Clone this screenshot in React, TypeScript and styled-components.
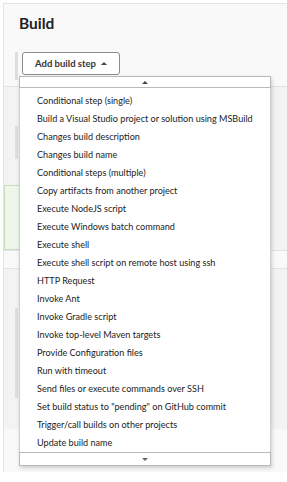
import React from "react";
import styled, { createGlobalStyle } from "styled-components";

const Global = createGlobalStyle`
  html, body { margin: 0; padding: 0; background: #ffffff; }
  body { font-family: Lato, "Open Sans", sans-serif; color: #333; }
  * { box-sizing: border-box; }
`;

const Page = styled.div`
  position: relative;
  width: 287px;
  height: 482px;
  overflow: hidden;
  padding: 3px 0 0 3px;
  background: #ffffff;
`;

const Panel = styled.div`
  border-top: 1px solid #e4e4e4;
  border-left: 1px solid #e4e4e4;
  background: #f9f9f9;
  height: 469px;
  display: flex;
  flex-direction: column;
`;

const Heading = styled.h2`
  margin: 9px 0 0 15px;
  font-family: Lato, "Open Sans", sans-serif;
  font-weight: 700;
  font-size: 15.5px;
  line-height: 20px;
  color: #222;
`;

const ButtonRow = styled.div`
  display: flex;
  align-items: flex-start;
  gap: 4px;
  margin: 19px 0 0 11px;
  height: 26px;
`;

const Handle = styled.div<{ $h: number }>`
  width: 3px;
  height: ${(p) => p.$h}px;
  background: #dedede;
`;

const AddButton = styled.button`
  display: flex;
  align-items: center;
  justify-content: center;
  gap: 5px;
  width: 98px;
  height: 23px;
  padding: 0;
  border: 1px solid #8c8c8c;
  border-radius: 3px;
  background: #ffffff;
  font-family: Lato, "Open Sans", sans-serif;
  font-size: 9.5px;
  font-weight: 700;
  color: #333;
`;

const Caret = styled.span<{ $down?: boolean }>`
  display: inline-block;
  width: 0;
  height: 0;
  border-left: 3px solid transparent;
  border-right: 3px solid transparent;
  ${(p) =>
    p.$down
      ? "border-top: 3px solid #666;"
      : "border-bottom: 3px solid #444;"}
`;

const Divider = styled.div<{ $mt: number }>`
  margin-top: ${(p) => p.$mt}px;
  height: 1px;
  background: #e2e2e2;
`;

const StepCard = styled.div<{ $h: number }>`
  height: ${(p) => p.$h}px;
  background: #f3f3f3;
  padding: 39px 0 0 11px;
`;

const GreenBox = styled.div`
  height: 65px;
  width: 200px;
  border: 1px solid #c8dcc0;
  background: #eef5ea;
`;

const GreenRow = styled.div`
  display: flex;
  background: #f3f3f3;
`;

const Spacer = styled.div<{ $h: number }>`
  height: ${(p) => p.$h}px;
  background: #f9f9f9;
`;

const Menu = styled.div`
  position: absolute;
  left: 19px;
  top: 76px;
  width: 252px;
  background: #ffffff;
  box-shadow: 1px 2px 4px rgba(0, 0, 0, 0.18);
  display: flex;
  flex-direction: column;
`;

const ScrollBox = styled.div<{ $h: number }>`
  height: ${(p) => p.$h}px;
  border: 1px solid #b9b9b9;
  background: #ffffff;
  display: flex;
  align-items: center;
  justify-content: center;
`;

const List = styled.ul`
  list-style: none;
  margin: 0;
  padding: 4px 0 0 0;
  border-left: 1px solid #cfcfcf;
  border-right: 1px solid #cfcfcf;
`;

const Item = styled.li`
  height: 18px;
  line-height: 18px;
  padding-left: 17px;
  font-family: Lato, "Open Sans", sans-serif;
  font-size: 9.1px;
  color: #222;
  white-space: nowrap;
`;

const items = [
  "Conditional step (single)",
  "Build a Visual Studio project or solution using MSBuild",
  "Changes build description",
  "Changes build name",
  "Conditional steps (multiple)",
  "Copy artifacts from another project",
  "Execute NodeJS script",
  "Execute Windows batch command",
  "Execute shell",
  "Execute shell script on remote host using ssh",
  "HTTP Request",
  "Invoke Ant",
  "Invoke Gradle script",
  "Invoke top-level Maven targets",
  "Provide Configuration files",
  "Run with timeout",
  "Send files or execute commands over SSH",
  'Set build status to "pending" on GitHub commit',
  "Trigger/call builds on other projects",
  "Update build name",
];

export default function App() {
  return (
    <>
      <Global />
      <Page>
        <Panel>
          <Heading>Build</Heading>
          <ButtonRow>
            <Handle $h={28} />
            <AddButton>
              Add build step <Caret />
            </AddButton>
          </ButtonRow>
          <Divider $mt={8} />
          <StepCard $h={98}>
            <Handle $h={33} />
          </StepCard>
          <GreenRow>
            <GreenBox />
          </GreenRow>
          <Divider $mt={0} />
          <Spacer $h={17} />
          <Divider $mt={0} />
          <StepCard $h={160}>
            <Handle $h={90} />
          </StepCard>
        </Panel>
        <Menu>
          <ScrollBox $h={12}>
            <Caret />
          </ScrollBox>
          <List>
            {items.map((t) => (
              <Item key={t}>{t}</Item>
            ))}
          </List>
          <ScrollBox $h={14}>
            <Caret $down />
          </ScrollBox>
        </Menu>
      </Page>
    </>
  );
}
